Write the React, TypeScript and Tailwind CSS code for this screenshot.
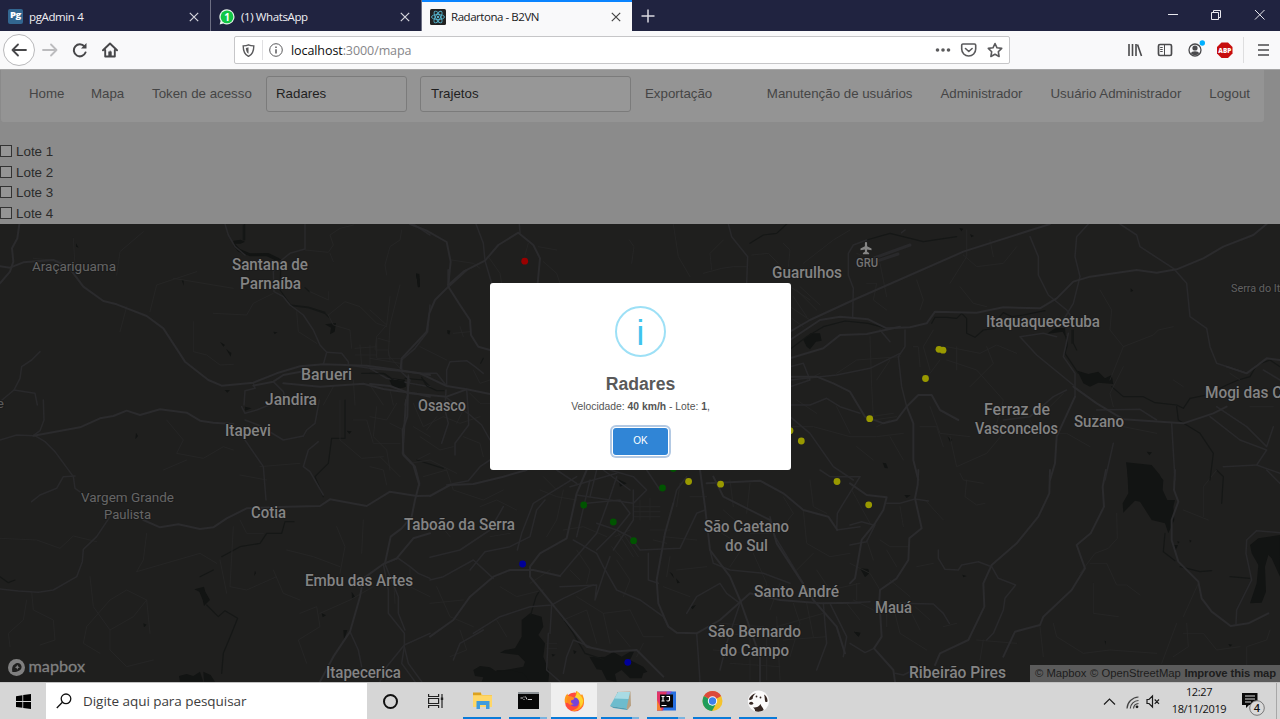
import type { ReactNode } from "react";

const UI = "font-['Open_Sans','Noto_Sans',sans-serif]";
const ARIAL = "font-['Liberation_Sans',Arial,sans-serif]";

type Tile = { x: number; y: number; major: string[]; mid: string[]; minor: string[]; water: string[]; river: string[] };

const tiles: Tile[] = [
  {
    x: 0,
    y: 125,
    major: [
      "M0 424L30 428L70 412L160 405L205 425L250 485L310 528L350 538L440 573L490 610L555 710L625 765L665 782L760 773L830 745L900 724L970 718L1100 722L1200 736L1290 750",
      "M58 297L52 340L36 370L40 410L30 440L0 475",
      "M760 782L820 770L850 750L930 735",
      "M850 775L960 785L1090 776L1150 792L1250 806L1290 815",
    ],
    mid: [
      "M675 297L685 330L705 365L735 390",
      "M915 297L915 372L870 385L845 405L820 440L822 500L850 515L870 540L910 570L940 615L960 660L980 682L970 718",
      "M980 682L1025 685L1045 710L1045 722",
      "M1290 540L1283 620L1245 670L1205 705L1205 735",
      "M1290 330L1240 297",
      "M120 680L95 705L65 725L60 760L42 795L75 800L105 805L112 840",
      "M0 830L42 795",
      "M760 775L765 790L735 797L732 840",
      "M820 770L850 800L860 840",
      "M1225 750L1225 800L1215 840",
      "M1045 720L1110 730L1160 760L1230 775L1290 785",
    ],
    minor: [
      "M915 375L985 382L1000 360L990 330L1020 310L1060 300",
      "M1205 315L1200 345L1170 365L1155 420L1160 450",
      "M990 385L1000 410",
      "M930 500L985 525L985 500",
      "M580 590L580 680L620 690L660 720L700 718",
      "M640 565L740 570L760 535L820 505",
      "M985 570L1035 530L1080 545L1130 595L1160 605",
      "M985 570L1000 600L1050 615L1055 670",
      "M1200 480L1170 600L1165 690L1200 730",
      "M1080 660L1085 720M1110 660L1110 720M1065 670L1130 665M1065 690L1130 690M1130 640L1130 700L1205 700",
      "M520 460L640 480L700 490",
      "M380 545L360 620",
      "M220 340L225 420M100 400L180 408",
      "M430 320L360 380L350 450M450 560L470 480L590 440",
      "M890 560L895 620L950 655",
      "M1060 765L1065 840M1000 785L970 840M1110 780L1150 840M1170 795L1180 840",
    ],
    water: [
      "M700 347L722 344L735 350L722 356L705 356L720 372L750 385L805 384L835 398L845 405L830 408L800 394L750 394L715 380L700 362Z",
      "M975 598L1008 594L1004 620L990 628L993 608Z",
      "M1165 758L1215 764L1218 785L1190 792L1175 780Z",
      "M660 650L675 660L670 665ZM678 672L694 684L692 695ZM1248 447L1258 462L1256 488ZM674 795L690 795L682 803ZM820 620L832 622L824 628ZM228 355L236 368L228 365ZM545 465L551 466L551 482Z",
    ],
    river: ["M734 297L734 345M730 300L730 345", "M843 405L840 495L873 542L925 548L975 565L988 578M873 540L925 546L975 562", "M1085 745L1150 745L1180 765", "M1215 760L1270 765L1290 785", "M915 488L928 500"],
  },
  {
    x: 0,
    y: 400,
    major: [
      "M430 360L480 382L535 373L600 387L640 382L680 355L740 325L860 320L960 318L990 298L1100 318L1170 275L1250 288L1290 287",
      "M100 107L150 98L240 82L300 55L340 48L380 32L420 45L480 28L560 38L600 62L640 68L700 72",
      "M1218 0L1208 160L1245 200L1258 250L1245 300L1235 350L1205 385L1172 410L1155 490",
      "M1290 400L1240 415L1190 475L1150 492L1090 535L1080 590L1050 695L1000 770L960 845",
    ],
    mid: [
      "M0 120L50 105L105 107L135 125L165 155L220 230L225 265L290 310",
      "M130 0L132 60L120 92L100 107",
      "M225 228L190 230L170 265L120 285L95 305",
      "M330 350L290 410L250 448L247 485L230 530L160 570L115 577L55 573L0 567",
      "M735 120L790 200L798 300",
      "M958 0L945 70L920 90L910 108",
      "M910 108L850 120L775 75L735 60",
      "M955 125L925 150L910 200L930 215L970 285",
      "M1150 492L1165 570L1165 640L1213 700L1213 740L1225 790L1265 845",
      "M1155 492L1195 590L1195 640L1215 690",
      "M1290 700L1213 735L1160 800L1140 845",
      "M1213 740L1205 790L1245 845",
      "M1050 695L1075 750L1085 800",
      "M1155 490L1195 475L1230 500L1255 520L1290 535",
      "M845 0L770 30L735 40L725 20",
    ],
    minor: [
      "M0 415L110 420L180 445L220 408L290 425",
      "M270 530L280 620L330 690L400 650L440 600L380 570L330 600L260 680L250 730L300 760",
      "M95 575L100 630L160 660L165 720L120 735M80 600L70 660L25 700L30 740",
      "M440 600L450 700M330 690L330 750L380 800L460 780",
      "M440 400L430 480L410 515M410 515L600 460L650 490",
      "M500 60L550 120L530 160L610 175L670 140L700 150",
      "M490 210L560 180",
      "M780 200L900 190M800 240L720 225",
      "M1020 0L1020 120L1085 175L1150 170M1060 60L1100 60L1120 130L1200 130",
      "M1290 160L1250 180",
      "M700 380L690 560L740 570L830 530M660 480L680 580M720 360L740 400L790 400",
      "M860 450L940 470L1020 500M1010 380L1035 440L1020 520",
      "M900 640L950 620L960 680L895 720L920 790M960 640L1050 600",
      "M820 510L850 580L900 600",
      "M1090 360L1085 460M1120 560L1050 600",
      "M1180 520L1185 610M1230 500L1230 560L1290 590",
    ],
    water: [
      "M583 568L612 560L616 575L630 600L612 618L608 600L598 575Z",
      "M537 828L560 822L580 828L600 815L610 845L540 845ZM610 815L632 825L645 845L612 845Z",
      "M1030 690L1042 690L1032 720ZM1055 575L1065 590L1056 598ZM965 640L978 646L968 652ZM765 512L768 520L762 528ZM430 670L440 674L432 682ZM408 98L414 108L406 118ZM1040 92L1055 94L1048 102ZM735 20L755 25L735 32Z",
    ],
    river: ["M600 530L640 510", "M665 470L720 440L780 430L800 400L845 400L855 365L882 365", "M620 615L655 650L675 632L713 655L695 700L670 760L665 820", "M1035 0L1035 115L995 115L985 190L945 230L970 290", "M0 530L25 548L45 540"],
  },
  {
    x: 370,
    y: 270,
    major: [
      "M0 295L90 302L150 310L230 348L290 358L360 372",
      "M290 0L235 50L195 90L178 130L170 185L95 265L92 295",
      "M235 0L235 50L270 105L300 150L303 195L325 230L360 240",
      "M0 342L60 348L120 370L230 380L290 358",
      "M115 320L112 440L98 480L100 555L130 585L148 645",
    ],
    mid: [
      "M230 348L230 300L240 275L290 272L315 290L340 310",
      "M228 360L225 420L235 460L215 520",
      "M290 358L295 430L296 465L255 520L255 555",
      "M90 302L120 330L110 370",
      "M150 310L200 310L230 348",
      "M225 380L300 435L335 465L360 510",
      "M230 645L295 632L330 590L360 570",
    ],
    minor: [
      "M60 80L50 165L20 200L15 240L55 240L60 270M50 165L0 120",
      "M0 265L90 280M25 205L60 215",
      "M150 230L230 270M250 190L300 185M270 170L280 200",
      "M130 400L160 470L220 440L270 460L330 440M150 500L210 540L250 530M170 480L200 440M130 470L180 500",
      "M300 370L330 400L360 400M310 300L330 340L360 330",
      "M20 410L10 500L50 540L60 600M60 460L100 480M0 440L50 450L80 400M30 560L90 620",
      "M260 400L280 420L260 460M280 500L330 520L340 560M120 580L180 570L260 610",
      "M0 590L40 600L50 645M160 620L230 600",
    ],
    water: ["M62 328L103 332L104 352L78 356L66 342Z", "M139 12L147 14L150 50L144 52ZM232 180L241 182L238 194L232 190Z"],
    river: ["M155 322L170 348L200 362L222 362", "M0 310L45 312L70 330", "M332 280L340 265", "M140 570L220 595"],
  },
  {
    x: 400,
    y: 220,
    major: ["M30 12L80 32L140 66L152 125L145 195", "M145 195L190 155L255 122L295 75L355 38L400 75L420 115L413 190"],
    mid: ["M228 12L250 70L255 122L275 190", "M985 12L995 50L1043 110L1040 190", "M358 12L360 38"],
    minor: [
      "M1043 140L1000 140L965 145L910 160M1055 105L1105 100L1135 130",
      "M688 60L702 80L695 130",
      "M155 120L220 130L240 145M265 110L300 160L305 190M430 125L470 160L480 190",
      "M820 12L835 110L870 170M970 60L930 100L935 150",
      "M1150 70L1170 90L1165 140M385 70L375 105M415 80L470 90",
    ],
    water: ["M48 160L58 162L60 202L54 200Z"],
    river: ["M1050 70L1090 45L1130 40L1160 12"],
  },
  {
    x: 430,
    y: 470,
    major: [
      "M470 0L440 70L410 205L330 250L300 290L300 320L365 400L470 530L540 545L620 540L700 620",
      "M0 78L60 45L130 42L220 20L290 0",
      "M730 100L705 190L680 330L685 400L715 470L740 488L800 490L870 450L960 370L1050 390L1170 400L1290 398",
      "M810 0L825 110L840 240L900 320L930 390L990 560L990 635",
      "M830 40L930 35L990 32L1060 70L1120 120L1195 140L1222 180",
      "M850 20L880 80L1020 150L1040 220L1115 335L1150 390L1220 470L1245 550",
      "M0 500L70 450L120 380L190 320L240 300L310 300L390 318",
    ],
    mid: [
      "M345 90L320 120L300 200L240 230L165 245L120 300",
      "M220 110L180 180L90 240L0 262",
      "M262 240L275 190L310 100L440 20",
      "M390 350L500 345L495 390L525 300L540 260",
      "M130 490L210 440L300 410L365 405L400 385L475 350L490 345",
      "M390 318L430 270L500 190L540 80L560 20",
      "M430 210L500 250L520 290L560 360L630 390L700 440L715 470",
      "M440 75L540 90L610 100L650 60L610 20L540 0",
      "M470 100L570 90L600 130L560 180L500 240",
      "M610 60L610 150L550 240",
      "M500 160L560 180L600 200L630 240L750 235L800 130L825 120",
      "M655 250L655 330L685 340",
      "M770 20L740 60L730 100",
      "M650 0L690 60",
      "M355 490L350 600L390 635",
      "M365 405L360 490",
      "M480 530L430 510L410 560L400 610",
      "M70 570L90 520L160 480",
      "M800 490L805 560L810 635M870 600L890 520L930 400",
      "M770 430L800 380L870 340L890 370L930 400",
      "M840 240L850 280L900 300L1000 310L1080 340",
      "M1180 400L1190 520L1160 600M1200 400L1250 500L1240 560",
      "M1290 20L1240 100L1222 130L1220 180L1290 170",
      "M1170 0L1200 20L1290 20M1020 140L1035 200L1120 340",
      "M380 0L440 40M480 30L440 200M500 0L480 80M520 0L600 60M420 50L560 10",
      "M0 330L40 320L130 270L190 325",
    ],
    minor: [
      "M610 110L690 110M610 125L690 125M610 140L690 140M630 90L630 150M660 85L660 150",
      "M565 190L610 260M580 190L625 260M555 200L600 180M545 230L580 270",
      "M20 350L60 440L130 470M0 400L100 390M50 0L70 60L160 90L220 60M20 150L60 200",
      "M210 350L260 380L340 360M200 450L230 500M90 480L110 540L60 560",
      "M400 450L470 420L500 520M440 380L520 430L600 420M520 430L540 520M600 420L640 500L700 500",
      "M700 200L800 210M740 300L830 290M700 350L780 380M720 260L710 320",
      "M850 500L960 490M850 540L960 550M870 460L1000 470M900 580L1050 590M1010 500L1010 630M1040 440L1050 630M960 500L960 630",
      "M1040 470L1180 430M1060 510L1190 500M1090 400L1110 460L1080 560M1130 400L1150 500M1250 400L1290 450",
      "M880 120L960 190L1020 190M860 180L940 230L900 290M900 30L910 110M960 40L950 130M1060 80L1090 130L1050 180M1120 120L1130 220L1200 260L1260 250M1100 300L1150 250",
      "M970 250L1010 340L1000 380M1050 340L1020 420M1160 300L1200 360L1290 340",
      "M150 110L200 90L260 120M180 200L240 190M350 200L380 150L400 60M330 60L380 80L440 90M340 20L380 60",
      "M400 180L460 170L530 200M440 240L480 300L470 340M300 340L360 300M420 300L450 330M560 270L600 330L580 380",
      "M660 180L720 180M670 210L710 220M750 40L740 110M780 80L830 80M1140 30L1150 110L1190 130",
      "M350 520L380 520M350 535L380 535M640 520L620 560M560 480L600 530",
    ],
    water: [
      "M300 430L335 440L340 470L325 495L345 520L340 560L358 605L355 635L190 635L200 600L225 600L280 590L285 575L265 555L210 548L225 540L255 535L275 500L275 450Z",
      "M130 600L150 588L180 592L200 605L240 600L280 610L300 635L155 635L160 622L135 618Z",
      "M478 560L500 562L525 560L550 546L575 560L600 545L612 545L600 570L640 590L652 605L640 610L635 625L600 625L575 600L555 612L560 635L530 630L515 600L500 598Z",
      "M718 305L728 312L732 325ZM738 325L750 338L742 340ZM565 28L590 40L570 50ZM780 410L798 405L788 418ZM1272 485L1290 490L1285 500ZM430 540L440 545L432 553ZM365 552L376 554L368 560Z",
    ],
    river: ["M330 360L318 380L302 435", "M370 405L430 490L465 550L520 568"],
  },
  {
    x: 850,
    y: 470,
    major: [
      "M600 0L598 70L565 140L500 220L425 285L400 340L403 410L355 510L270 550L255 585",
      "M768 0L758 50L762 110L722 190L680 225L705 295L665 360L580 440L570 465L495 485L460 560",
      "M975 0L972 60L985 95L965 150L965 210L985 275L1045 335L1055 385L1085 425L1142 468L1195 460L1255 430",
      "M0 40L50 75L110 82L100 120L75 160L35 210L15 325L0 340",
      "M205 0L203 45L195 85L215 175L178 205L175 270L140 325L90 360L88 390L95 500L72 535L130 600L135 635",
    ],
    mid: [
      "M1290 188L1220 182L1190 210L1188 250L1205 330L1160 420L1158 462",
      "M425 290L445 325L497 345L465 385L460 420L430 490L410 510",
      "M425 290L385 275L335 285L325 300L285 298L265 265L265 240",
      "M110 100L150 100L195 87L235 93",
      "M0 165L35 155L70 165M0 225L50 215L75 165",
      "M1250 0L1290 40M0 398L60 395M150 400L250 402L280 430L298 460",
      "M0 520L45 548L72 535M135 610L160 615L190 600",
    ],
    minor: [
      "M800 130L802 205L775 235L735 250L690 310M720 280L770 280L800 345L830 345L870 375",
      "M730 340L730 430L805 440",
      "M1260 480L1250 510L1190 530L1190 590M980 460L935 580M1010 460L1015 530L970 560M1000 490L1060 490L1100 540L1170 530",
      "M610 460L620 500L700 550L780 540L920 550M570 470L580 560",
      "M350 30L345 80L380 105L405 100M330 10L340 30L400 40M230 95L280 150",
      "M1000 120L1075 150M1100 0L1060 50L1060 140M1045 340L1000 440",
      "M90 210L120 230L175 230M120 330L180 380M200 290L250 280M110 400L110 470M130 410L150 490L230 540M170 400L210 480M195 410L240 450M50 210L70 270",
      "M0 280L60 310L90 360M20 340L20 390M5 60L60 160M150 110L160 170M110 240L140 290M400 510L390 570",
      "M70 420L10 390M280 470L320 460M380 510L500 520",
    ],
    water: [
      "M832 0L915 0L940 30L938 60L952 90L975 90L970 110L973 150L955 190L945 160L905 150L870 95L855 92L820 128L818 100L835 70Z",
      "M1290 195L1225 205L1200 225L1205 250L1225 285L1220 340L1200 400L1235 398L1248 365L1245 290L1255 255L1265 265L1290 320Z",
      "M30 295L55 297L58 310L45 322ZM970 225L984 225L976 243ZM12 485L32 488L26 500ZM163 75L182 76L170 84ZM205 580L212 600L208 632ZM337 314L350 318L340 322ZM1135 522L1147 524L1140 530ZM982 213L989 216L984 221ZM1018 209L1025 212L1020 218ZM764 512L768 514L766 524Z",
    ],
    river: ["M1140 320L1200 325", "M945 190L940 245L975 272", "M990 290L1050 305L1085 302", "M1100 0L1120 20L1115 100"],
  },
  {
    x: 790,
    y: 220,
    major: [
      "M0 335L60 300L190 240L520 95L780 12",
      "M0 360L90 300L150 290L235 298L290 325L360 322L410 310L435 275L560 278L640 262L750 265L800 235L850 185L900 170L1040 150L1100 158L1160 148L1240 115L1300 80L1390 45L1430 12",
      "M0 415L100 385L150 345L230 342L330 320",
      "M850 500L920 550L1000 598L1180 610L1270 580L1310 560",
      "M0 470L80 470L130 490L180 515L225 590L280 610L320 600L350 560L385 525L425 525L450 570L505 600",
      "M350 560L370 610L370 720L385 780",
      "M855 530L800 650L795 730L780 780",
      "M1310 440L1370 460L1430 415L1470 420",
    ],
    mid: [
      "M175 165L175 100L190 75L230 60M175 165L190 205L188 290",
      "M720 50L745 110L745 165L775 225L830 270L850 300",
      "M895 12L860 50L855 110L870 170L850 250L820 300",
      "M990 12L1040 45L1050 80L1150 145L1190 190L1200 290L1250 325L1260 380L1280 430L1370 460",
      "M345 330L345 380L325 410L335 500L350 560",
      "M690 350L760 340L800 350M690 350L740 405L850 495",
      "M835 340L820 410L855 460L855 530",
      "M330 400L240 445L140 465L0 480",
      "M0 555L60 555L110 535L150 560L210 580",
      "M0 590L60 640L130 740L190 780",
      "M920 570L1050 568L1100 600",
      "M1145 610L1155 780M970 670L945 780",
      "M1260 590L1350 660L1430 690L1400 735L1470 760M1280 560L1370 620L1430 680L1450 620",
      "M345 30L335 38M270 330L300 365",
      "M1300 740L1400 735M0 440L40 430L60 480L0 500",
      "M830 510L790 530L720 590L640 600",
      "M1420 450L1470 480",
    ],
    minor: [
      "M40 130L130 60L180 30M0 200L60 240M10 230L50 290M20 210L80 270M0 260L60 300M30 200L90 255M5 295L40 320",
      "M200 100L270 130L290 230M230 190L260 190L250 240L290 270M380 180L400 240L390 270M530 30L530 110L480 190M510 200L550 250L590 260",
      "M680 80L640 130L560 140L520 105",
      "M930 210L965 270L960 330L1000 380L960 480M1000 380L1090 345L1105 330L1150 320",
      "M430 330L400 380L420 450M470 380L570 400L620 375L680 400M240 350L245 500L250 590M590 380L610 430L540 500",
      "M370 380L385 380L390 440M420 460L450 420M500 380L500 450M300 420L260 480",
      "M470 420L560 450L640 540L620 610M420 560L450 640L540 650M300 650L340 720M180 650L260 650L340 640M0 620L70 620L180 650",
      "M820 520L780 560M640 640L590 700L500 740L480 650M720 600L740 640L830 640L900 680M910 590L1000 620L1100 640",
      "M200 680L250 720M20 540L80 580M140 560L180 640M50 480L90 460M390 620L440 620L460 680",
      "M1000 440L960 520L970 560M1150 480L1180 500M1380 560L1450 560M1350 480L1320 460",
      "M250 600L320 590M240 590L310 580M260 620L300 600M600 60L610 110M140 460L200 420L330 410",
    ],
    water: [
      "M770 342L800 322L825 325L828 355L818 335Z",
      "M1008 727L1085 735L1110 765L1115 780L1015 780Z",
      "M40 360L62 340L90 340L95 362L78 365L60 388L50 380Z",
      "M862 452L895 462L925 455L945 475L965 465L970 492L925 488L900 500L880 490Z",
      "M278 728L288 730L294 745L284 744ZM473 650L487 660L480 665ZM1070 695L1086 697L1078 706ZM508 24L520 26L514 34ZM540 42L552 48L544 52ZM1022 205L1030 212L1022 216Z",
    ],
    river: [
      "M0 388L50 350L100 320L165 303L235 310L290 325",
      "M425 310L435 292L470 292L500 295L515 280L530 295L530 340L555 352L580 330L615 325L620 300L640 278L665 290L700 285L765 272",
      "M850 330L850 370L860 390M846 330L846 370",
      "M828 350L832 375L825 400L845 430L865 460",
      "M965 500L1000 530L1060 530L1095 548L1160 555L1180 565L1200 535L1250 525L1310 495L1345 480L1380 470L1400 435L1440 420L1470 440",
      "M230 60L300 40L400 65L500 50",
      "M1160 560L1165 600L1230 640L1270 700L1260 780",
    ],
  },
];

type Label = { t: string; x: number; y: number; w: number; s: number; c: string; wt: number };
const L = (t: string, x: number, y: number, w: number, s = 16.2, c = "#848484", wt = 500): Label => ({ t, x, y, w, s, c, wt });
const labels: Label[] = [
  L("Araçariguama", 32, 271, 84, 13.6, "#666666", 400),
  L("Santana de", 232, 270, 76),
  L("Parnaíba", 240, 289, 61),
  L("Guarulhos", 772, 278, 70),
  L("GRU", 856, 267, 22, 12, "#747474"),
  L("Itaquaquecetuba", 986, 327, 114),
  L("Serra do Itapeti", 1231, 292, 73, 10.2, "#626262", 400),
  L("Mogi das Cruzes", 1205, 398, 115),
  L("Ferraz de", 984, 415, 66),
  L("Vasconcelos", 975, 434, 83),
  L("Suzano", 1074, 427, 50),
  L("Barueri", 301, 380, 51),
  L("Jandira", 265, 405, 52),
  L("Osasco", 418, 411, 48),
  L("Itapevi", 225, 436, 46),
  L("Vargem Grande", 81, 502, 93, 13.6, "#666666", 400),
  L("Paulista", 104, 519, 47, 13.6, "#666666", 400),
  L("Cotia", 251, 518, 35),
  L("Taboão da Serra", 404, 530, 111),
  L("São Caetano", 704, 532, 85),
  L("do Sul", 725, 551, 43),
  L("Embu das Artes", 305, 586, 108),
  L("Santo André", 754, 597, 85),
  L("Mauá", 875, 613, 37),
  L("São Bernardo", 708, 637, 93),
  L("do Campo", 720, 656, 69),
  L("Itapecerica", 326, 678, 75),
  L("Ribeirão Pires", 909, 678, 97),
  L("e", -4, 408, 8, 13, "#5a5a5a", 400),
];

const radars: [number, number, string][] = [
  [524.7, 261.2, "#990000"],
  [939, 349.3, "#999900"],
  [943, 350.2, "#999900"],
  [925.5, 378.5, "#999900"],
  [869.7, 418.7, "#999900"],
  [790, 430.7, "#999900"],
  [801.3, 441, "#999900"],
  [837, 481.5, "#999900"],
  [868.7, 504.8, "#999900"],
  [688.6, 481.5, "#999900"],
  [720.6, 484.2, "#999900"],
  [673.3, 468.5, "#005400"],
  [662.5, 488, "#005400"],
  [583.7, 505, "#005400"],
  [613.3, 522, "#005400"],
  [633.6, 540.7, "#005400"],
  [522.6, 564, "#000099"],
  [627.8, 662.3, "#000099"],
];

function MapCanvas() {
  return (
    <svg viewBox="0 224 1280 458" className="block h-full w-full" fill="none" strokeLinejoin="round" strokeLinecap="round">
      <rect x="0" y="224" width="1280" height="458" fill="#1f1f1e" />
      {tiles.map((t, i) => (
        <g key={i} transform={`translate(${t.x} ${t.y}) scale(.33333)`}>
          {t.water.map((d, k) => <path key={k} d={d} fill="#121413" />)}
          {t.river.map((d, k) => <path key={k} d={d} stroke="#151716" strokeWidth="3.6" />)}
          {t.minor.map((d, k) => <path key={k} d={d} stroke="#262627" strokeWidth="2.5" />)}
          {t.mid.map((d, k) => <path key={k} d={d} stroke="#29292b" strokeWidth="4.6" />)}
          {t.major.map((d, k) => <path key={k} d={d} stroke="#2b2b2d" strokeWidth="6" />)}
        </g>
      ))}
      <path d="M874 258l36-13M868 264l30-10" stroke="#29292b" strokeWidth="3" />
      <path d="M864.900 243.400c0-1.800 2.200-1.800 2.200 0v2.800l4.400 2.400v1.700l-4.400-.9v2.400l2 1.300v1.200h-6.200v-1.200l2-1.300v-2.400l-4.400.9v-1.700l4.400-2.400z" fill="#858585" />
      {labels.map((l) => (
        <text key={l.t} x={l.x} y={l.y} fontSize={l.s} fill={l.c} fontWeight={l.wt} textLength={l.w} lengthAdjust="spacingAndGlyphs" fontFamily="Roboto, sans-serif" stroke="#1b1b1b" strokeWidth="2" paintOrder="stroke">
          {l.t}
        </text>
      ))}
      {radars.map(([x, y, c], i) => <circle key={i} cx={x} cy={y} r="3.4" fill={c} />)}
      <g>
        <circle cx="16.500" cy="667.500" r="8.500" fill="#808080" />
        <path d="M12.300 671.900c-.7-4 .2-6.600 2.400-7.700a4 4 0 1 1 4.300 6.500c-2 1.300-4.500 1.500-6.700 1.200z" fill="#1f1f1e" />
        <path d="M17.300 664.700l.8 1.700 1.700.8-1.700.8-.8 1.700-.8-1.700-1.700-.8 1.700-.8z" fill="#808080" />
        <text x="28.500" y="671.500" fontSize="15" fill="#808080" stroke="#808080" strokeWidth=".3" textLength="56.500" lengthAdjust="spacingAndGlyphs" fontFamily="Lato, sans-serif">mapbox</text>
      </g>
    </svg>
  );
}

function Close({ c }: { c: string }) {
  return (
    <svg className="h-[10px] w-[10px] shrink-0" viewBox="0 0 10 10" stroke={c} strokeWidth="1.2">
      <path d="M.8.8l8.400 8.400M9.200.8L.8 9.200" />
    </svg>
  );
}

function Tab({ icon, title, active }: { icon: ReactNode; title: ReactNode; active?: boolean }) {
  return (
    <div className={active ? "flex h-[31px] w-[210px] items-center border-t-2 border-[#0a84ff] bg-[#f9f9fa] pl-2 pr-[11px] text-[#1a1a1d]" : "flex h-[31px] w-[211px] items-center border-r border-[#6d6f83] pl-2 pr-[11px] pt-0.5 text-[#f0f0f4]"}>
      {icon}
      <span className={active ? "ml-[5px] flex-1 whitespace-nowrap text-[11.500px] tracking-[-0.450px]" : "ml-[6px] flex-1 whitespace-nowrap text-[11.500px] tracking-[-0.380px]"}>{title}</span>
      <Close c={active ? "#444" : "#d5d5dc"} />
    </div>
  );
}

function Browser() {
  return (
    <header className={`${UI} shrink-0`}>
      <div className="flex h-[31px] bg-[#202340]">
        <Tab
          title="pgAdmin 4"
          icon={<span className="flex h-[15px] w-[15px] items-center justify-center rounded-[2px] bg-[#326690] text-[9.500px] font-extrabold leading-none tracking-[-0.5px] text-white"><span className="-mt-[3px]">Pg</span></span>}
        />
        <Tab
          title="(1) WhatsApp"
          icon={
            <svg className="h-4 w-4" viewBox="0 0 16 16">
              <path d="M8 .3a7.600 7.600 0 1 1-3.700 14.300L.6 15.600l1-3.600A7.600 7.600 0 0 1 8 .3z" fill="#e9f5ec" />
              <circle cx="8" cy="7.900" r="6.400" fill="#12c645" />
              <text x="8" y="11.600" textAnchor="middle" fontSize="10" fontWeight="700" fill="#fff" fontFamily="Open Sans, sans-serif">1</text>
            </svg>
          }
        />
        <Tab
          active
          title="Radartona - B2VN"
          icon={
            <svg className="h-4 w-4" viewBox="0 0 16 16" fill="none" stroke="#55b4cc" strokeWidth=".9">
              <rect width="16" height="16" rx="1.500" fill="#222" stroke="none" />
              <ellipse cx="8" cy="8" rx="6.500" ry="2.500" />
              <ellipse cx="8" cy="8" rx="6.500" ry="2.500" transform="rotate(60 8 8)" />
              <ellipse cx="8" cy="8" rx="6.500" ry="2.500" transform="rotate(120 8 8)" />
              <circle cx="8" cy="8" r="1.200" fill="#55b4cc" stroke="none" />
            </svg>
          }
        />
        <div className="flex flex-1 items-center pl-[9px]">
          <svg className="h-[14px] w-[14px]" viewBox="0 0 14 14" stroke="#d9d9e0" strokeWidth="1.500"><path d="M7 .5v13M.5 7h13" /></svg>
        </div>
        <svg className="mr-[15px] mt-[9px] h-3 w-[97px]" viewBox="0 0 97 12" fill="none" stroke="#e8e8ee" strokeWidth="1">
          <path d="M0 5.500h10M43.500 3.500h7v7h-7zM45.500 3.500v-2h7v7h-2M87 1l9.500 9.500M96.500 1L87 10.500" />
        </svg>
      </div>
      <div className="flex h-[38px] items-center bg-[#f9f9fa]">
        <div className="ml-[3px] flex h-[32px] w-[32px] items-center justify-center rounded-full border border-[#b9b9bb] bg-white">
          <svg className="h-4 w-4" viewBox="0 0 16 16" fill="none" stroke="#474749" strokeWidth="1.800" strokeLinecap="round" strokeLinejoin="round"><path d="M1.500 8H15M7 2.500L1.500 8 7 13.500" /></svg>
        </div>
        <svg className="ml-[7px] h-4 w-4" viewBox="0 0 16 16" fill="none" stroke="#bcbcbe" strokeWidth="1.800" strokeLinecap="round" strokeLinejoin="round"><path d="M1 8h13.500M9 2.500L14.500 8 9 13.500" /></svg>
        <svg className="ml-[14px] h-4 w-4" viewBox="0 0 16 16" fill="none" stroke="#474749" strokeWidth="2" strokeLinecap="round"><path d="M13.500 10.500A6 6 0 1 1 12.500 4.500" /><path d="M14.500 1v5.500H9z" fill="#474749" stroke="none" /></svg>
        <svg className="ml-[14px] h-4 w-4" viewBox="0 0 16 16" fill="none" stroke="#474749" strokeWidth="1.900" strokeLinecap="round" strokeLinejoin="round"><path d="M1 8.300L8 1.500l7 6.800M3.200 8v6.500h9.600V8" /><path d="M6.300 14V9.500h3.400V14z" fill="#474749" stroke="none" /><path d="M8.200 9v2" strokeWidth="1" /></svg>
        <div className="ml-[116px] flex h-[28px] w-[776px] items-center rounded-[2px] border border-[#c6c6c8] bg-white">
          <svg className="ml-[7px] h-[13px] w-[13px]" viewBox="0 0 13 13" fill="none" stroke="#5a5a5c" strokeWidth="1.400"><path d="M6.500.8c2 .9 3.500 1 5.300 1.100 0 5-1.300 8.600-5.300 10.500C2.500 10.500 1.200 6.900 1.200 1.900 3 1.800 4.500 1.700 6.500.8z" /><path d="M6.500 3.200v6.500C4.500 8.500 4 6.500 3.800 4c1 0 1.800-.3 2.700-.8z" fill="#5a5a5c" stroke="none" /></svg>
          <div className="ml-[7px] h-5 w-px bg-[#e0e0e2]" />
          <svg className="ml-[6px] h-[14px] w-[14px]" viewBox="0 0 14 14" fill="none" stroke="#5a5a5c"><circle cx="7" cy="7" r="6.300" /><path d="M7 6.200v4.300M7 3.400v1.500" strokeWidth="1.500" /></svg>
          <span className="ml-2 flex-1 pt-[2px] text-[12.500px] tracking-[-0.080px] text-[#0c0c0d]">localhost<span className="text-[#868689]">:3000/mapa</span></span>
          <svg className="mr-[5px] h-4 w-[70px]" viewBox="0 0 70 16" fill="none" stroke="#5a5a5c" strokeWidth="1.600" strokeLinejoin="round" strokeLinecap="round">
            <g fill="#5a5a5c" stroke="none"><circle cx="3.500" cy="8" r="1.800" /><circle cx="9" cy="8" r="1.800" /><circle cx="14.500" cy="8" r="1.800" /></g>
            <path d="M29 2h11.500a1.200 1.200 0 0 1 1.200 1.200V7a7 7 0 0 1-14 0V3.200A1.200 1.200 0 0 1 29 2zM31.500 6.500l3.300 3 3.300-3" />
            <path d="M61 1.500l2 4.300 4.700.6-3.400 3.300.8 4.800L61 12.200l-4.100 2.300.8-4.800-3.400-3.300 4.700-.6z" />
          </svg>
        </div>
        <svg className="ml-[117px] h-[26px] w-[144px]" viewBox="0 0 144 26" fill="none" stroke="#4a4a4c" strokeWidth="1.600">
          <path d="M2 7v12M5.500 7v12M9 7v12M10.500 7.500l4 11.500" />
          <rect x="31.500" y="7.500" width="13" height="11" rx="1.500" strokeWidth="1.700" />
          <path d="M37.500 8v10M33.200 10.500h2.500M33.200 12.500h2.500M33.200 14.500h2.500" strokeWidth="1" />
          <circle cx="68" cy="13" r="6" strokeWidth="1.300" />
          <circle cx="68" cy="11" r="2.600" fill="#4a4a4c" stroke="none" />
          <path d="M64 16.500c0-3 8-3 8 0-1.500 2-6.500 2-8 0z" fill="#4a4a4c" stroke="none" />
          <circle cx="75.300" cy="6" r="2.700" fill="#00b0ff" stroke="none" />
          <path d="M94.500 5.500h6.500l4.500 4.500v6.500l-4.500 4.500h-6.500L90 16.500V10z" fill="#c70d0d" stroke="none" />
          <text x="97.800" y="15.600" fontSize="7" fontWeight="800" textAnchor="middle" fill="#fff" stroke="none" fontFamily="Open Sans, sans-serif" textLength="13" lengthAdjust="spacingAndGlyphs">ABP</text>
          <path d="M116.500-2v30" stroke="#dededf" strokeWidth="1" />
          <path d="M131 8h11M131 13h11M131 18h11" strokeWidth="1.700" />
        </svg>
      </div>
    </header>
  );
}

function Nav() {
  return (
    <nav className="mr-4 flex h-[52px] items-start rounded-b-[3px] border-l border-[#8a8a8a] bg-[#949494] text-[13.300px] text-[#454545]">
      <span className="ml-[28px] mt-[14px] w-[62px]">Home</span>
      <span className="mt-[14px] w-[61px]">Mapa</span>
      <span className="mt-[14px] w-[114px] whitespace-nowrap">Token de acesso</span>
      <span className="mt-[6px] flex h-[36px] w-[141px] items-center rounded-[3px] border border-[#7b7b7b] bg-[#979797] pl-[9px] text-[#1f1f1f]">Radares</span>
      <span className="ml-[13px] mt-[6px] flex h-[36px] w-[211px] items-center rounded-[3px] border border-[#7b7b7b] bg-[#979797] pl-[10px] text-[#1f1f1f]">Trajetos</span>
      <span className="ml-[14px] mt-[14px]">Exportação</span>
      <div className="mr-[14px] mt-[14px] flex flex-1 justify-end gap-7 whitespace-nowrap">
        <span>Manutenção de usuários</span>
        <span>Administrador</span>
        <span>Usuário Administrador</span>
        <span>Logout</span>
      </div>
    </nav>
  );
}

const appIcons: { icon: ReactNode; active?: boolean; multi?: boolean }[] = [
  { icon: <><path d="M2 3h8l1.500 2H21v12H2z" fill="#f8cb57" /><path d="M2 2.500h8v2.500H2z" fill="#dba11f" /><path d="M2 6h19v11H2z" fill="#ffd767" /><path d="M5.500 11h13v8h-3.500v-4h-6v4H5.500z" fill="#3e9bdc" /></> },
  { multi: true, icon: <><path d="M1 2h21v17H1z" fill="#070707" /><path d="M1 2h21v2H1z" fill="#8d9397" /><path d="M3.500 8h2.500M7 6.500v1M7 9v1M8.500 6.500l1.500 3M11 9.500h4" stroke="#ddd" strokeWidth=".9" /></> },
  {
    active: true,
    icon: (
      <>
        <circle cx="11.500" cy="12" r="9.500" fill="#ff4a3d" />
        <path d="M2 13C1 8 3 5 4.500 3.500c0 1.500 1 2.500 2 3l6 1 .5-6.500c3 1 4 3 5 4.500L19 4c2.500 4 3 9 0 13-3.500 4-8 4.500-11 3.500 8-1 9-6 7-9l-8 1z" fill="#ff9a1c" />
        <path d="M14.500.8c0 3 4.500 4.700 5.500 9.200.6 3-1 6-3.500 7.500 2-4 0-8-5-10 1.500-1 2.500-4 3-6.700z" fill="#ffd42e" />
        <circle cx="11.500" cy="12" r="4.500" fill="#7543d9" />
        <path d="M4.500 7.500c3-2 6-1 7 1.500l-3.500 1.500c-.5 2 1 3.500 3 3.500-3 2-7 0-7-4z" fill="#ff8a20" />
      </>
    ),
  },
  { multi: true, icon: <><path d="M8 2l13.500-.5.5 14L18.500 20z" fill="#b7a184" /><path d="M9 2h12l-3.500 16.500L1 16z" fill="#6dbccd" /><path d="M9 2h12l-1.500 7L5.500 8.500z" fill="#a9dbe4" /><path d="M1 16l16.500 2.500 1 1.500-14-2z" fill="#4d9db2" /></> },
  { multi: true, icon: <><path d="M2 1.500h19v19H2z" fill="#276fe0" /><path d="M2 1.500h10L8 20.500H2z" fill="#e23568" /><path d="M2 10l5 10.500H2z" fill="#f58132" /><path d="M12 1.500h5l-5 5z" fill="#9747cc" /><path d="M5 4.500h13v13H5z" fill="#08080a" /><path d="M6.500 6.500h3M8 6.500v4.500M6.500 11h3M11.500 6.500h3v3.500c0 1-2 1.200-3 .6M6.500 15.500h5" stroke="#fff" strokeWidth="1.100" fill="none" /></> },
  { icon: <><circle cx="11.500" cy="11" r="10" fill="#f4c32d" /><path d="M11.500 11L2.840 6A10 10 0 0 1 20.160 6z" fill="#dc4a3c" /><path d="M2.840 6A10 10 0 0 0 11 21l4.300-7.800-3.800-2.200z" fill="#209c5a" /><circle cx="11.500" cy="11" r="4.700" fill="#fff" /><circle cx="11.500" cy="11" r="3.700" fill="#3f80ea" /></> },
  {
    icon: (
      <>
        <circle cx="11.500" cy="11.200" r="10.600" fill="#fbfafa" />
        <path d="M1.800 9.500C3 6 5.500 4 9 3.200 7 4.800 5.500 6.500 5.800 8.500c-1 1.300-2.500 1.800-4 1zM17 4.500c2.200 1.300 3.800 4 3.500 7-.8.800-1.800.8-2.300 0C17.500 9 18 7 17 4.500z" fill="#362722" />
        <ellipse cx="4.200" cy="13.200" rx="2" ry="1.500" fill="#362722" />
        <circle cx="9.500" cy="6.500" r=".9" fill="#362722" />
        <circle cx="13.500" cy="7.500" r=".9" fill="#362722" />
        <path d="M6 17.500c3 .5 6-.8 7.500-3.500.8 2.500 2.500 3.500 3.200 6-2.500 1.700-6 2.200-8.700 1 .3-1.300-.5-2.500-2-3.500z" fill="#362722" />
      </>
    ),
  },
];

function Taskbar() {
  return (
    <footer className={`${UI} flex h-[37px] shrink-0 border-t border-[#c2c2c2] bg-[#d6d6d6]`}>
      <div className="flex w-[46px] items-center justify-center">
        <svg className="h-[15px] w-[15px]" viewBox="0 0 15 15"><path d="M0 2.200L6.400 1.200V7.100H0zM7.200 1.100L15 0v7.100H7.200zM0 7.900h6.400v5.900L0 12.900zM7.200 7.900H15V15l-7.800-1.100z" fill="#000" /></svg>
      </div>
      <div className="flex w-[321px] items-center bg-white pl-[10px]">
        <svg className="h-4 w-4" viewBox="0 0 16 16" fill="none" stroke="#111" strokeWidth="1.300"><circle cx="10" cy="5.800" r="4.800" /><path d="M6.400 9.300L.8 15" /></svg>
        <span className="ml-[11px] whitespace-nowrap text-[13.500px] tracking-[-0.050px] text-[#3c3c3c]">Digite aqui para pesquisar</span>
      </div>
      <div className="flex w-[46px] items-center justify-center"><div className="h-[15px] w-[15px] rounded-full border-2 border-[#111]" /></div>
      <div className="flex w-[46px] items-center justify-center">
        <svg className="h-4 w-4" viewBox="0 0 16 16" fill="none" stroke="#222" strokeWidth="1.200"><path d="M.6 1v2.500h10V1M.6 15v-2.500h10V15M.6 5.500h10v5H.6zM14 1v14" /><path d="M12.800 4.500h2.400v2.500h-2.400z" fill="#222" stroke="none" /></svg>
      </div>
      {appIcons.map((a, i) => (
        <div key={i} className={a.active ? "flex w-[46px] flex-col items-center bg-[#efefef]" : "flex w-[46px] flex-col items-center"}>
          <svg className="mt-[7px] h-[23px] w-[23px] shrink-0" viewBox="0 0 23 23">{a.icon}</svg>
          <div className={a.active ? "mt-auto h-[2px] w-full bg-[#0a7bd8]" : "mt-auto flex h-[2px] w-[38px] bg-[#0a7bd8]"}>
            {a.multi && <div className="ml-auto h-full w-[7px] bg-[#7ab3de]" />}
          </div>
        </div>
      ))}
      <svg className="ml-auto mt-[10px] h-[18px] w-[60px]" viewBox="0 0 60 18" fill="none" stroke="#1b1b1b" strokeWidth="1.200">
        <path d="M4 11.500L9.500 6l5.500 5.500" />
        <path d="M27 15.500A12 12 0 0 1 38.500 4M30.300 15.500a8.500 8.500 0 0 1 8.200-8M33.500 15.500a5.500 5.500 0 0 1 5-5" stroke="#444" />
        <circle cx="37" cy="13.800" r="1.400" fill="#1b1b1b" stroke="none" />
        <path d="M47 6.500h2L52.500 3v11L49 10.500h-2zM54.700 6.500l4.300 4.300M59 6.500l-4.300 4.300" />
      </svg>
      <div className="ml-[9px] w-[60px] text-center text-[11px] leading-[17px] tracking-[-0.400px] text-[#111]">
        <div>12:27</div>
        <div>18/11/2019</div>
      </div>
      <svg className="ml-[13px] mr-[10px] mt-[8px] h-[26px] w-[24px]" viewBox="0 0 24 26">
        <path d="M0 2h15.500v12H7l-3 3v-3H0z" fill="#0a0a0a" />
        <path d="M3 5h10M3 8h10M3 11h6" stroke="#d6d6d6" />
        <circle cx="15" cy="17" r="7.300" fill="#d9d9d9" stroke="#777" />
        <text x="15" y="21" fontSize="11" fontWeight="600" textAnchor="middle" fill="#111" fontFamily="Open Sans, sans-serif">4</text>
      </svg>
      <div className="w-[4px] border-l border-[#a8a8a8]" />
    </footer>
  );
}

function RadarDialog() {
  return (
    <div role="dialog" className={`${ARIAL} absolute left-[490px] top-[283px] flex h-[187px] w-[301px] flex-col items-center rounded-[3px] bg-white`}>
      <div className="mt-[23px] flex h-[51px] w-[51px] shrink-0 items-center justify-center rounded-full border-2 border-[#9de0f6] text-[35px] leading-none text-[#3fc3ee]">
        <span className="mt-px">i</span>
      </div>
      <h2 className="mt-[15px] text-[17.600px] font-bold leading-[24px] text-[#595959]">Radares</h2>
      <p className="mt-[4px] text-[10.350px] leading-[14px] text-[#545454]">
        Velocidade: <b>40 km/h</b> - Lote: <b>1</b>,
      </p>
      <button className="mt-[14px] h-[27px] w-[55px] rounded-[3px] bg-[#3085d6] pb-px text-[10px] leading-none text-white shadow-[0_0_0_1px_#fff,0_0_0_3px_#b3c9e3]">OK</button>
    </div>
  );
}

export default function App() {
  return (
    <div className="relative flex h-[719px] w-[1280px] flex-col overflow-hidden">
      <Browser />
      <section className={`${ARIAL} h-[155px] shrink-0 border-t border-[#a5a5a5] bg-[#8b8b8b]`}>
        <Nav />
        <ul className="mt-[20px] text-[13.400px] leading-[20.600px] text-[#2b2b2b]">
          {["Lote 1", "Lote 2", "Lote 3", "Lote 4"].map((lot) => (
            <li key={lot} className="flex">
              <span className="mt-[3px] h-3 w-3 border border-[#333] bg-[#959595]" />
              <span className="ml-1">{lot}</span>
            </li>
          ))}
        </ul>
      </section>
      <main className={`${ARIAL} relative min-h-0 flex-1`}>
        <MapCanvas />
        <div className="absolute bottom-0 right-0 flex h-[17px] w-[250px] items-center justify-between whitespace-nowrap bg-[#5b5b5b] pl-[5px] pr-[4px] text-[11.250px] text-[#1d1d1d]">
          <span>© Mapbox</span>
          <span>© OpenStreetMap</span>
          <b className="tracking-[-0.100px]">Improve this map</b>
        </div>
      </main>
      <Taskbar />
      <RadarDialog />
    </div>
  );
}
